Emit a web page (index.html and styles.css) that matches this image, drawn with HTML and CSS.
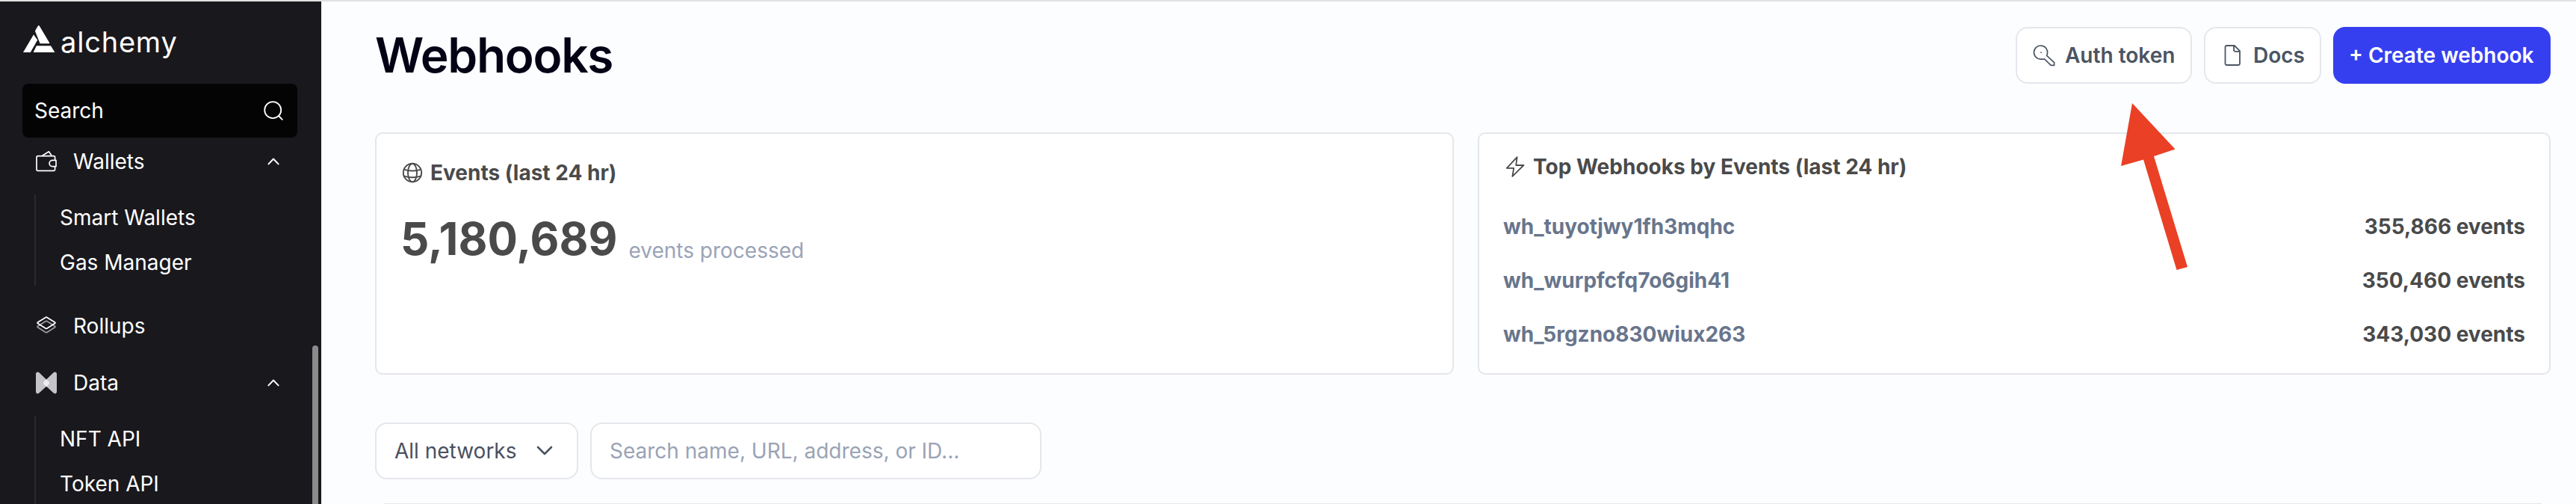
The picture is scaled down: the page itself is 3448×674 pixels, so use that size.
FILE: index.html
```html
<!DOCTYPE html>
<html lang="en">
<head>
<meta charset="utf-8">
<title>Webhooks</title>
<link rel="stylesheet" href="styles.css">
</head>
<body>
<div class="app">
  <aside class="sidebar">
    <a class="logo">
      <svg class="logo-mark" viewBox="0 0 42 36" fill="#fff"><path d="M20.6 0 Q21.4 0 22 1L35.2 23.2Q35.4 24 34.6 24.2H22.6L16.2 8.2Q15.8 7.4 16.4 6.4L19.6 1Q20 0 20.6 0Z"/><path d="M14 12.2L19.2 19.6 9.8 36H0Z"/><path d="M17.8 27.2H37L42.4 36H13.6Z"/></svg>
      <span class="logo-text">alchemy</span>
    </a>
    <div class="side-search">
      <span>Search</span>
      <svg class="side-search-icon" viewBox="0 0 26 26" fill="none" stroke="#fff" stroke-width="1.8"><circle cx="12.2" cy="12.2" r="11"/><path d="M20 20l4.8 4.8" stroke-linecap="round"/></svg>
    </div>
    <nav class="nav">
      <div class="nav-head">
        <svg class="nav-icon" viewBox="0 0 30 30" fill="none" stroke="#fff" stroke-width="1.7" stroke-linejoin="round"><rect x="2" y="7.6" width="24.6" height="19.8" rx="1.6"/><path d="M9.500 7.200L18.400 1.800L22 7"/><path fill="#19181d" d="M28 13.400H23.200a4.100 4.100 0 0 0 0 8.200H28Z"/></svg>
        <span>Wallets</span>
        <svg class="chev" viewBox="0 0 16 10" fill="none" stroke="#fff" stroke-width="2" stroke-linecap="round" stroke-linejoin="round"><path d="M1.400 8.400L8 1.500l6.600 6.900"/></svg>
      </div>
      <div class="nav-sub"><a>Smart Wallets</a><a>Gas Manager</a></div>
      <div class="nav-head">
        <svg class="nav-icon" viewBox="0 0 30 30" fill="none" stroke-width="1.800" stroke-linejoin="round"><path stroke="#9c9ca0" d="M14.200 8.600Q15 8.200 15.800 8.600L26.400 15.200Q27.400 16 26.400 16.800L15.800 23.400Q15 23.800 14.200 23.400L3.600 16.800Q2.600 16 3.600 15.200Z"/><path stroke="#fff" d="M14.200 3.400Q15 3 15.800 3.400L26.400 10Q27.400 10.800 26.400 11.600L15.800 18.200Q15 18.600 14.200 18.200L3.600 11.600Q2.600 10.800 3.600 10Z"/></svg>
        <span>Rollups</span>
      </div>
      <div class="nav-head">
        <svg class="nav-icon" viewBox="0 0 30 30"><path fill="#c5c5c8" d="M1 2.800C1 .6 3.600-.4 5.400 1.200L15 10.400 24.600 1.200C26.400-.4 29 .6 29 2.800V26.800C29 29.200 26.400 30.200 24.600 28.600L15 19.800 5.400 28.600C3.600 30.200 1 29.200 1 26.800Z"/><path fill="#ededf0" d="M15 10.200L18.500 13.400q1.300 1.700 0 3.400L15 20.200 11.500 16.800q-1.300-1.700 0-3.400Z"/></svg>
        <span>Data</span>
        <svg class="chev" viewBox="0 0 16 10" fill="none" stroke="#fff" stroke-width="2" stroke-linecap="round" stroke-linejoin="round"><path d="M1.400 8.400L8 1.500l6.600 6.900"/></svg>
      </div>
      <div class="nav-sub nav-sub-last"><a>NFT API</a><a>Token API</a></div>
    </nav>
    <div class="scroll-thumb"></div>
  </aside>

  <main class="main">
    <header class="page-head">
      <h1>Webhooks</h1>
      <div class="actions">
        <button class="btn btn-auth">
          <svg class="btn-icon" viewBox="0 0 32 32" fill="none" stroke="#4b5563" stroke-width="1.700" stroke-linejoin="round"><path d="M19.600 16.400L29.600 25.600V29.300H25.200L16.800 21.200H11.700A9.100 9.100 0 1 1 20.500 13.800Z"/><circle cx="12" cy="12.200" r="0.900" fill="#4b5563" stroke="none"/></svg>
          <span>Auth token</span>
        </button>
        <button class="btn btn-docs">
          <svg class="btn-icon" viewBox="0 0 32 32" fill="none" stroke="#4b5563" stroke-width="1.800" stroke-linejoin="round"><path d="M18.800 3H8.700Q6.500 3 6.500 5.200V26.800Q6.500 29 8.700 29H23.800Q26 29 26 26.800V10.200Z"/><path d="M18 3V8.600Q18 10.800 20.200 10.800H26"/></svg>
          <span>Docs</span>
        </button>
        <button class="btn btn-primary"><span>+ Create webhook</span></button>
      </div>
    </header>

    <section class="cards">
      <article class="card card-total">
        <h2 class="card-title">
          <svg class="title-icon" viewBox="-2 0 28 28" fill="none" stroke="#4a4a4a" stroke-width="1.900"><circle cx="14" cy="14" r="12.200"/><ellipse cx="14" cy="14" rx="6" ry="12.200"/><path d="M2.600 9.600Q14 13.400 25.400 9.600M2.600 18.400Q14 22.200 25.400 18.400"/></svg>
          <span>Events (last 24 hr)</span>
        </h2>
        <p class="total"><span class="total-num">5,180,689</span><span class="total-label">events processed</span></p>
      </article>
      <article class="card card-top">
        <h2 class="card-title">
          <svg class="title-icon" viewBox="0 0 28 28" fill="none" stroke="#4a4a4a" stroke-width="1.800" stroke-linejoin="round"><path d="M16.600 1.200L2.800 15.800H12.200L10.400 26.800L25.400 12H15.200Z"/></svg>
          <span>Top Webhooks by Events (last 24 hr)</span>
        </h2>
        <ul class="rank">
          <li><a>wh_tuyotjwy1fh3mqhc</a><span>355,866 events</span></li>
          <li><a>wh_wurpfcfq7o6gih41</a><span>350,460 events</span></li>
          <li><a>wh_5rgzno830wiux263</a><span>343,030 events</span></li>
        </ul>
      </article>
    </section>

    <div class="filters">
      <div class="select"><span>All networks</span>
        <svg class="select-chev" viewBox="0 0 22 14" fill="none" stroke="#4b5563" stroke-width="2.600" stroke-linecap="round" stroke-linejoin="round"><path d="M2 2l9 9 9-9"/></svg>
      </div>
      <div class="field">Search name, URL, address, or ID...</div>
    </div>
    <div class="table"></div>
  </main>
</div>
<svg class="arrow" viewBox="0 0 90 226" fill="#ea4025"><path d="M15 0L72.500 61.500L44 71L89 219L74.500 223L30 75.500L0 84Z"/></svg>
</body>
</html>
```

FILE: styles.css
```css
* { box-sizing: border-box; }
body {
  margin: 0;
  width: 3448px;
  height: 674px;
  overflow: hidden;
  position: relative;
  font-family: Inter, "Liberation Sans", sans-serif;
  font-size: 28px;
  line-height: 40px;
  background: #fcfdff;
}
h1, h2, p, ul { margin: 0; padding: 0; }
svg { display: block; flex: none; overflow: visible; }
.app {
  display: flex;
  height: 674px;
  border-top: 2px solid #e1e1e1;
}

.sidebar {
  position: relative;
  width: 430px;
  flex: none;
  background: #19181d;
  color: #fff;
  overflow: hidden;
}
.logo { display: flex; height: 110px; padding: 32px 0 0 31px; }
.logo-mark { width: 42px; height: 36px; }
.logo-text {
  margin: -1px 0 0 8px;
  font-size: 38px;
  line-height: 46px;
  letter-spacing: 0.8px;
}
.side-search {
  display: flex;
  align-items: center;
  justify-content: space-between;
  height: 72px;
  margin: 0 32px 0 30px;
  padding: 0 19px 0 16px;
  border-radius: 8px;
  background: #040404;
}
.side-search-icon { width: 26px; height: 26px; }
.nav-head {
  display: flex;
  align-items: center;
  height: 76px;
  padding: 0 56px 0 47px;
}
.nav-head:first-child { height: 70px; padding-bottom: 6px; }
.nav-icon { width: 30px; height: 30px; margin-right: 21px; }
.chev { width: 16px; height: 10px; margin-left: auto; }
.nav-sub {
  margin: 6px 0 16px 46px;
  border-left: 2px solid #29282d;
  height: 122px;
}
.nav-sub-last { height: 118px; margin-bottom: 0; }
.nav-sub a {
  display: block;
  height: 60px;
  padding: 11px 0 0 32px;
}
.nav-sub-last a:last-child { height: 58px; }
.scroll-thumb {
  position: absolute;
  left: 418px;
  top: 460px;
  width: 8px;
  height: 212px;
  border-radius: 4px 4px 0 0;
  background: #8b8b8b;
}

.main { flex: 1; padding: 34px 34px 0 72px; }
.page-head { display: flex; justify-content: space-between; height: 141px; }
h1 {
  color: #030315;
  font-size: 64px;
  font-weight: 600;
  line-height: 76px;
  letter-spacing: -1.3px;
}
.actions { display: flex; gap: 16px; height: 76px; }
.btn {
  display: flex;
  align-items: center;
  height: 76px;
  padding: 0 22px 0 20px;
  border: 2px solid #e4e7ec;
  border-radius: 16px;
  background: #fff;
  color: #4b5563;
  font: 600 28px/40px Inter, sans-serif;
  white-space: nowrap;
}
.btn-auth { width: 236px; }
.btn-docs { width: 157px; }
.btn-icon { width: 32px; height: 32px; margin-right: 12px; }
.btn-primary {
  width: 291px;
  padding: 0 19px;
  border-color: #363ff0;
  background: #363ff0;
  color: #fff;
}

.cards { display: grid; grid-template-columns: 1444px 1436px; gap: 32px; height: 324px; }
.card {
  border: 2px solid #e4e7eb;
  border-radius: 10px;
  background: #fff;
  color: #4a4a4a;
}
.card-title {
  display: flex;
  align-items: center;
  font-size: 28px;
  line-height: 40px;
  font-weight: 700;
}
.title-icon { width: 28px; height: 28px; margin-right: 12px; }
.card-total { padding: 32px; }
.total { display: flex; align-items: flex-end; margin-top: 32px; }
.total-num { font-size: 60px; line-height: 72px; font-weight: 700; }
.total-label { margin-left: 15px; color: #9aa3b8; }
.card-top { padding: 24px 32px 0; }
.card-top .card-title { padding-left: 2px; }
.card-top .title-icon { margin-right: 10px; }
.rank { list-style: none; margin-top: 24px; }
.rank li {
  display: flex;
  justify-content: space-between;
  align-items: center;
  height: 72px;
  font-weight: 700;
}
.rank a { color: #68758c; }

.filters { display: flex; gap: 16px; margin-top: 64px; }
.select, .field {
  display: flex;
  align-items: center;
  height: 76px;
  border: 2px solid #e4e7ec;
  border-radius: 16px;
  background: #fff;
}
.select { width: 272px; padding-left: 24px; color: #4b5060; }
.select-chev { width: 22px; height: 14px; margin-left: 26px; }
.field { width: 604px; padding-left: 24px; color: #9aa3b5; }
.table {
  margin: 32px 12px 0;
  border-top: 1px solid #e4e7eb;
}

.arrow { position: absolute; left: 2839px; top: 138px; width: 90px; height: 226px; }
```
